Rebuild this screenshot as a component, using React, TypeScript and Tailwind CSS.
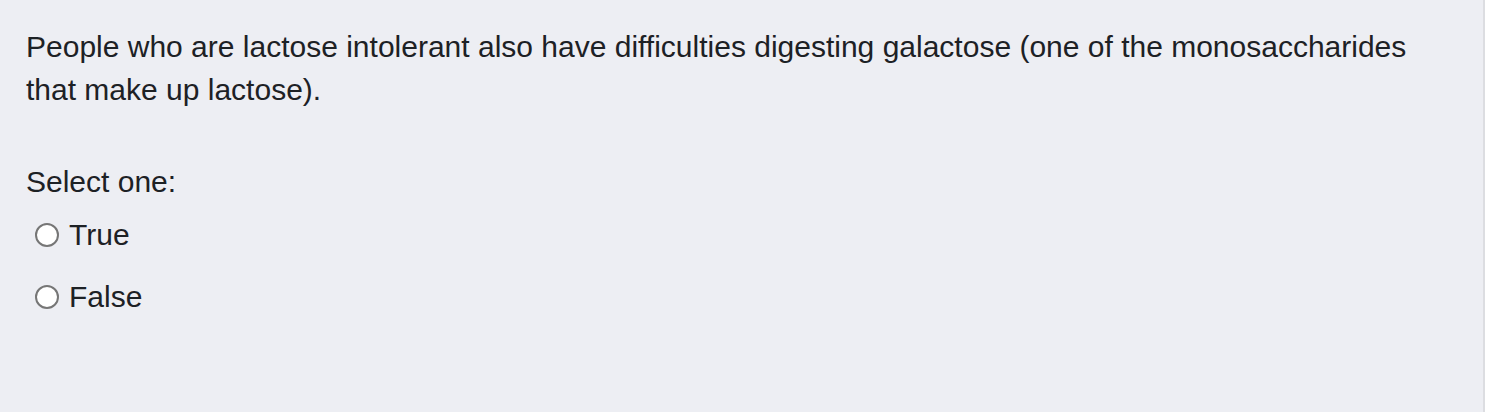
import React from "react";

function Radio({ label }: { label: string }) {
  return (
    <label className="flex items-center h-[43px]">
      <span className="ml-[9px] w-[24px] h-[24px] rounded-full border-2 border-[#767676] bg-white shrink-0" />
      <span className="ml-[10px]">{label}</span>
    </label>
  );
}

export default function App() {
  return (
    <div className="flex h-[412px] w-[1494px] bg-white overflow-hidden">
      <div
        className="w-[1485px] shrink-0 h-full bg-[#edeef3] border-r-2 border-[#dcdde1] text-[#1d2125] text-[30px] leading-[43px] pt-[25px] pl-[26px] whitespace-nowrap"
        style={{ fontFamily: '"Liberation Sans", Arial, sans-serif' }}
      >
        <p>
          People who are lactose intolerant also have difficulties digesting galactose (one of the monosaccharides
          <br />
          that make up lactose).
        </p>
        <p className="mt-[49px]">Select one:</p>
        <div className="mt-[10px] flex flex-col gap-[19px]">
          <Radio label="True" />
          <Radio label="False" />
        </div>
      </div>
    </div>
  );
}
